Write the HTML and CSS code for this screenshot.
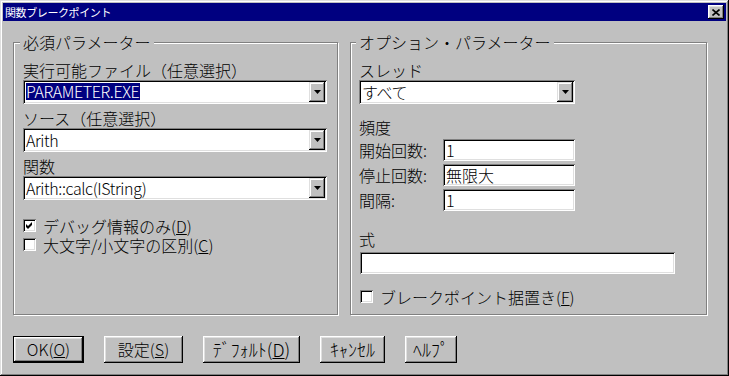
FILE: index.html
```html
<!DOCTYPE html>
<html>
<head>
	<meta charset="utf-8">
	<title>関数ブレークポイント</title>
	<link rel="stylesheet" href="styles.css">
</head>

<body>
	<div class="window">
		<div class="titlebar">
			<span class="title">関数ブレークポイント</span>
			<span class="close">
				<svg width="8" height="7" viewBox="0 0 8 7"><path d="M0.5 0.5 L7.5 6.5 M7.5 0.5 L0.5 6.5" stroke="#000" stroke-width="1.6" fill="none"/></svg>
			</span>
		</div>

		<div class="panes">
			<fieldset class="group group-required">
				<legend>必須パラメーター</legend>

				<div class="label first">実行可能ファイル（任意選択）</div>
				<div class="combo">
					<div class="field"><span class="selected">PARAMETER.EXE</span></div>
					<div class="drop"><svg width="7" height="4" viewBox="0 0 7 4"><polygon points="0,0 7,0 3.5,4" fill="#000"/></svg></div>
				</div>

				<div class="label">ソース（任意選択）</div>
				<div class="combo">
					<div class="field">Arith</div>
					<div class="drop"><svg width="7" height="4" viewBox="0 0 7 4"><polygon points="0,0 7,0 3.5,4" fill="#000"/></svg></div>
				</div>

				<div class="label">関数</div>
				<div class="combo">
					<div class="field">Arith::calc(IString)</div>
					<div class="drop"><svg width="7" height="4" viewBox="0 0 7 4"><polygon points="0,0 7,0 3.5,4" fill="#000"/></svg></div>
				</div>

				<div class="checks">
					<div class="check">
						<span class="box"><svg width="7" height="7" viewBox="0 0 7 7"><polygon points="0,2 2,4 6,0 6,3 2,7 0,5" fill="#000"/></svg></span>
						<span>デバッグ情報のみ(<u>D</u>)</span>
					</div>
					<div class="check">
						<span class="box"></span>
						<span>大文字/小文字の区別(<u>C</u>)</span>
					</div>
				</div>
			</fieldset>

			<fieldset class="group group-optional">
				<legend>オプション・パラメーター</legend>

				<div class="label first">スレッド</div>
				<div class="combo combo-thread">
					<div class="field">すべて</div>
					<div class="drop"><svg width="7" height="4" viewBox="0 0 7 4"><polygon points="0,0 7,0 3.5,4" fill="#000"/></svg></div>
				</div>

				<div class="label freq">頻度</div>
				<div class="row">
					<span class="row-label">開始回数:</span>
					<div class="text">1</div>
				</div>
				<div class="row">
					<span class="row-label">停止回数:</span>
					<div class="text">無限大</div>
				</div>
				<div class="row">
					<span class="row-label">間隔:</span>
					<div class="text">1</div>
				</div>

				<div class="label expr">式</div>
				<div class="text text-expr"></div>

				<div class="check check-defer">
					<span class="box"></span>
					<span>ブレークポイント据置き(<u>F</u>)</span>
				</div>
			</fieldset>
		</div>

		<div class="buttons">
			<button class="btn btn-default btn-ok">OK(<u>O</u>)</button>
			<button class="btn btn-set">設定(<u>S</u>)</button>
			<button class="btn btn-defaults">ﾃﾞﾌｫﾙﾄ(<u>D</u>)</button>
			<button class="btn btn-cancel">ｷｬﾝｾﾙ</button>
			<button class="btn btn-help">ﾍﾙﾌﾟ</button>
		</div>
	</div>
</body>
</html>
```

FILE: styles.css
```css
body, html {
	margin: 0;
	padding: 0;
}

body {
	width: 729px;
	height: 376px;
	overflow: hidden;
	background: #c0c0c0;
	font-family: "Noto Sans CJK JP", "Noto Sans", sans-serif;
	font-size: 16px;
	font-weight: 300;
	line-height: 18px;
	color: #000;
}

.window {
	box-sizing: border-box;
	width: 729px;
	height: 376px;
	padding: 3px;
	background: #c0c0c0;
	box-shadow: inset -1px -1px #000, inset 1px 1px #dfdfdf, inset -2px -2px #808080, inset 2px 2px #fff;
}

/* title bar */
.titlebar {
	display: flex;
	align-items: center;
	justify-content: space-between;
	height: 18px;
	padding: 0 2px 0 2px;
	background: #000080;
	color: #fff;
}

.title {
	font-size: 11px;
	font-weight: 400;
	line-height: 14px;
	letter-spacing: -0.4px;
}

.close {
	display: flex;
	align-items: center;
	justify-content: center;
	width: 16px;
	height: 14px;
	background: #c0c0c0;
	box-shadow: inset -1px -1px #000, inset 1px 1px #fff, inset -2px -2px #808080, inset 2px 2px #dfdfdf;
}

/* group boxes */
.panes {
	display: flex;
	gap: 12px;
	padding: 12px 0 0 10px;
}

.group {
	box-sizing: border-box;
	height: 282px;
	margin: 0;
	padding: 10px 9px 0;
	min-width: 0;
	border: 1px solid #808080;
	box-shadow: inset 1px 1px #fff, 1px 1px #fff;
}

.group-required {
	width: 325px;
}

.group-optional {
	width: 357px;
	padding-left: 8px;
}

.group legend {
	margin-left: -3px;
	padding: 0 3px;
	background: #c0c0c0;
	line-height: 18px;
}

.label {
	margin-top: 5px;
	white-space: nowrap;
}

.label.first {
	margin-top: 0;
}

/* sunken fields */
.combo,
.text {
	box-sizing: border-box;
	background: #fff;
	box-shadow: inset 1px 1px #808080, inset -1px -1px #fff, inset 2px 2px #000, inset -2px -2px #dfdfdf;
}

.combo {
	display: flex;
	width: 304px;
	height: 24px;
	margin-top: 1px;
	padding: 2px;
}

.combo-thread {
	width: 216px;
}

.combo .field {
	flex: 1;
	padding-left: 1px;
	line-height: 20px;
	letter-spacing: -0.4px;
	white-space: nowrap;
}

.selected {
	display: inline-block;
	margin-top: 1px;
	padding: 0 1px 0 0;
	background: #000080;
	color: #fff;
	line-height: 17px;
	vertical-align: top;
}

.drop {
	display: flex;
	align-items: center;
	justify-content: center;
	width: 16px;
	height: 20px;
	background: #c0c0c0;
	box-shadow: inset -1px -1px #000, inset 1px 1px #dfdfdf, inset -2px -2px #808080, inset 2px 2px #fff;
}

.text {
	width: 132px;
	height: 22px;
	padding: 0 3px;
	line-height: 22px;
	white-space: nowrap;
}

/* checkboxes */
.checks {
	margin-top: 16px;
}

.check {
	display: flex;
	align-items: center;
	gap: 7px;
	height: 19px;
	white-space: nowrap;
}

.box {
	box-sizing: border-box;
	display: flex;
	align-items: center;
	justify-content: center;
	width: 13px;
	height: 13px;
	background: #fff;
	box-shadow: inset 1px 1px #808080, inset -1px -1px #fff, inset 2px 2px #000, inset -2px -2px #dfdfdf;
}

/* optional parameters */
.label.freq {
	margin-top: 14px;
}

.row {
	display: flex;
	align-items: center;
	height: 22px;
	margin-top: 3px;
}

.row-label {
	width: 84px;
	line-height: 22px;
}

.label.expr {
	margin-top: 19px;
}

.text-expr {
	width: 315px;
	margin: 4px 0 0 1px;
}

.check-defer {
	margin: 13px 0 0 1px;
}

/* dialog buttons */
.buttons {
	display: flex;
	gap: 20px;
	padding: 21px 0 0 10px;
}

.btn {
	box-sizing: border-box;
	height: 27px;
	margin: 0;
	padding: 0;
	border: 0;
	background: #c0c0c0;
	font-family: inherit;
	font-size: 16px;
	font-weight: 300;
	line-height: 25px;
	color: #000;
	white-space: nowrap;
	box-shadow: inset -1px -1px #000, inset 1px 1px #fff, inset -2px -2px #808080, inset 2px 2px #dfdfdf;
}

.btn-default {
	border: 1px solid #000;
}

.btn-defaults,
.btn-cancel,
.btn-help {
	font-size: 18px;
}

.btn-ok { width: 71px; }
.btn-set { width: 79px; }
.btn-defaults { width: 97px; }
.btn-cancel { width: 65px; }
.btn-help { width: 52px; }
```
